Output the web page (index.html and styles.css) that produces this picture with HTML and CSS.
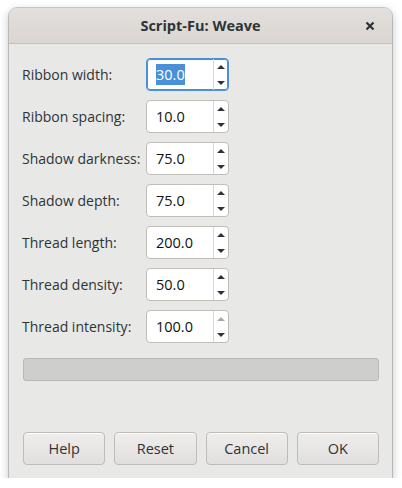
FILE: index.html
```html
<!DOCTYPE html>
<html>
<head>
<meta charset="utf-8">
<link rel="stylesheet" href="styles.css">
</head>
<body>
<div class="window">
  <div class="titlebar">
    <span class="title">Script-Fu: Weave</span>
    <svg class="close" width="10" height="10" viewBox="0 0 10 10"><path d="M1.5 1.5 L8.5 8.5 M8.5 1.5 L1.5 8.5" stroke="#2e3436" stroke-width="2.2" stroke-linecap="butt"/></svg>
  </div>
  <div class="content">
    <div class="form">
      <label class="lbl">Ribbon width:</label>
      <div class="spin focus"><div class="entry"><span class="sel">30.0</span></div><div class="btns"><span class="up"></span><span class="down"></span></div></div>
      <label class="lbl">Ribbon spacing:</label>
      <div class="spin"><div class="entry">10.0</div><div class="btns"><span class="up"></span><span class="down"></span></div></div>
      <label class="lbl">Shadow darkness:</label>
      <div class="spin"><div class="entry">75.0</div><div class="btns"><span class="up"></span><span class="down"></span></div></div>
      <label class="lbl">Shadow depth:</label>
      <div class="spin"><div class="entry">75.0</div><div class="btns"><span class="up"></span><span class="down"></span></div></div>
      <label class="lbl">Thread length:</label>
      <div class="spin"><div class="entry">200.0</div><div class="btns"><span class="up"></span><span class="down"></span></div></div>
      <label class="lbl">Thread density:</label>
      <div class="spin"><div class="entry">50.0</div><div class="btns"><span class="up"></span><span class="down"></span></div></div>
      <label class="lbl">Thread intensity:</label>
      <div class="spin"><div class="entry">100.0</div><div class="btns"><span class="up disabled"></span><span class="down"></span></div></div>
    </div>
    <div class="progress"></div>
    <div class="spacer"></div>
    <div class="buttons">
      <button class="btn">Help</button>
      <button class="btn">Reset</button>
      <button class="btn">Cancel</button>
      <button class="btn">OK</button>
    </div>
  </div>
</div>
</body>
</html>
```
FILE: styles.css
```css
html, body {
  margin: 0;
  padding: 0;
  background: #ffffff;
}
body {
  font-family: "Open Sans", "Noto Sans", sans-serif;
  font-size: 14px;
  color: #2e3436;
}
.window {
  margin: 8px 0 0 9px;
  width: 383px;
  height: 470px;
  box-sizing: border-box;
  border-radius: 8px 8px 0 0;
  background: #e8e8e7;
  box-shadow: 0 0 0 1px rgba(0,0,0,0.18), 0 3px 9px 1px rgba(0,0,0,0.22);
  display: flex;
  flex-direction: column;
  overflow: hidden;
}
.titlebar {
  height: 35px;
  flex: none;
  border-bottom: 1px solid #c3bfbb;
  background: linear-gradient(#e2dfdc, #dad6d2);
  border-radius: 8px 8px 0 0;
  display: flex;
  align-items: center;
  justify-content: center;
  position: relative;
}
.title {
  font-weight: bold;
  font-size: 14.5px;
  color: #2e3436;
}
.close {
  position: absolute;
  right: 17px;
  top: 13px;
}
.content {
  flex: 1;
  display: flex;
  flex-direction: column;
  padding: 14px 13px 13px 14px;
}
.form {
  display: grid;
  grid-template-columns: 123px 83px;
  row-gap: 9px;
  align-items: center;
}
.lbl {
  margin-left: -1px;
  color: #2e3436;
}
.spin {
  height: 33px;
  box-sizing: border-box;
  border: 1px solid #c0bdb9;
  border-radius: 4px;
  background: #ffffff;
  display: flex;
  overflow: hidden;
}
.spin.focus {
  border-color: #4a90d9;
  box-shadow: inset 0 0 0 1px #4a90d9;
}
.entry {
  width: 66px;
  box-sizing: border-box;
  padding-left: 9px;
  display: flex;
  align-items: center;
  color: #111111;
  font-size: 14.5px;
}
.sel {
  background: #4a90d9;
  color: #ffffff;
  padding: 1px 0;
}
.btns {
  flex: 1;
  border-left: 1px solid #d8d6d3;
  display: flex;
  flex-direction: column;
  justify-content: space-between;
  align-items: center;
  padding: 6px 0 5px;
}
.up, .down {
  width: 0;
  height: 0;
  border-left: 4.5px solid transparent;
  border-right: 4.5px solid transparent;
}
.up {
  border-bottom: 4.5px solid #2e3436;
}
.up.disabled {
  border-bottom-color: #a8abab;
}
.down {
  border-top: 4.5px solid #2e3436;
}
.progress {
  margin-top: 15px;
  height: 23px;
  box-sizing: border-box;
  width: 356px;
  border: 1px solid #b8b8b5;
  border-radius: 3px;
  background: #cececc;
}
.spacer {
  flex: 1;
}
.buttons {
  display: flex;
  gap: 9px;
  width: 356px;
}
.btn {
  flex: 1;
  height: 33px;
  border: 1px solid #bfbcb8;
  border-radius: 4px;
  background: linear-gradient(#efeeed, #e1dfdd);
  box-shadow: inset 0 1px 0 rgba(255,255,255,0.8);
  font-family: "Open Sans", "Noto Sans", sans-serif;
  font-size: 14.5px;
  color: #2e3436;
  padding: 0;
}
```
